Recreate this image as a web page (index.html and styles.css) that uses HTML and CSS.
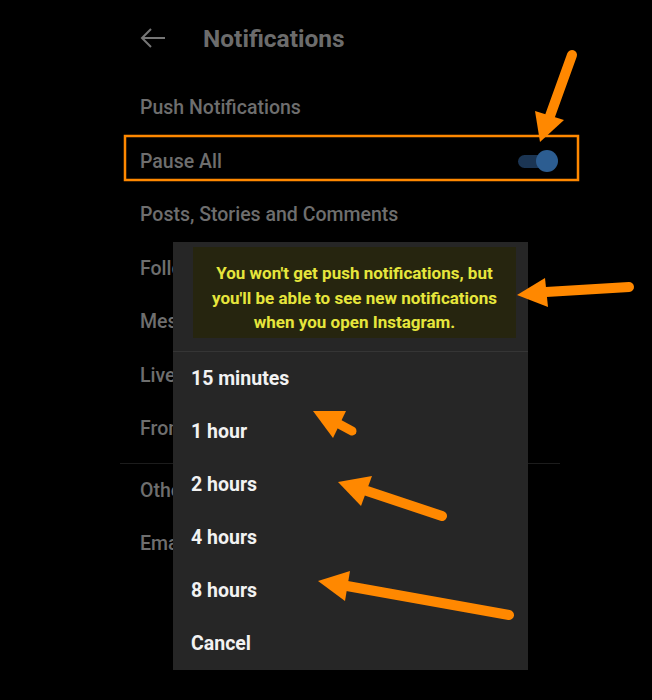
FILE: index.html
```html
<!DOCTYPE html>
<html lang="en">
<head>
    <meta charset="UTF-8">
    <title>Notifications</title>
    <link rel="stylesheet" href="styles.css">
</head>
<body>
    <div class="screen">
        <header class="topbar">
            <svg class="back" width="26" height="20" viewBox="0 0 26 20">
                <path d="M25 10H2M11 1L2 10l9 9" fill="none" stroke="#767676" stroke-width="2"/>
            </svg>
            <h1>Notifications</h1>
        </header>
        <ul class="settings">
            <li>Push Notifications</li>
            <li class="pause">
                <span>Pause All</span>
                <span class="toggle"><span class="knob"></span></span>
            </li>
            <li>Posts, Stories and Comments</li>
            <li>Following and Followers</li>
            <li>Messages</li>
            <li>Live and IGTV</li>
            <li>From Instagram</li>
            <li class="sep"></li>
            <li>Other Notification Types</li>
            <li>Email and SMS</li>
        </ul>

        <div class="sheet">
            <p class="note">You won't get push notifications, but<br>you'll be able to see new notifications<br>when you open Instagram.</p>
            <div class="options">
                <div class="option">15 minutes</div>
                <div class="option">1 hour</div>
                <div class="option">2 hours</div>
                <div class="option">4 hours</div>
                <div class="option">8 hours</div>
                <div class="option">Cancel</div>
            </div>
        </div>

        <!-- annotation layer -->
        <svg class="marks" width="652" height="700" viewBox="0 0 652 700">
            <g fill="#ff8800" stroke="#ff8800" stroke-linecap="round">
                <rect x="125" y="136" width="453" height="44" fill="none" stroke-width="2.5"/>

                <line x1="572" y1="55" x2="550" y2="116" stroke-width="10"/>
                <polygon points="540,142 535,111 564,120" stroke="none"/>

                <line x1="629" y1="287" x2="546" y2="292" stroke-width="10"/>
                <polygon points="517,295 545,278 548,307" stroke="none"/>

                <line x1="352" y1="431" x2="339" y2="424" stroke-width="9"/>
                <polygon points="313,411 346,411 333,438" stroke="none"/>

                <line x1="442" y1="516" x2="367" y2="491" stroke-width="10"/>
                <polygon points="338,482 372,476 361,506" stroke="none"/>

                <line x1="509" y1="615" x2="347" y2="586" stroke-width="10"/>
                <polygon points="318,581 350,571 345,601" stroke="none"/>
            </g>
        </svg>
    </div>
</body>
</html>
```

FILE: styles.css
```css
body {
    margin: 0;
    padding: 0;
    background-color: #000;
    font-family: Roboto, "Liberation Sans", sans-serif;
}
.screen {
    position: relative;
    width: 652px;
    height: 700px;
    overflow: hidden;
    background-color: #000;
}
.topbar {
    display: flex;
    align-items: center;
    height: 76px;
    padding-left: 140px;
    gap: 37px;
}
.topbar h1 {
    margin: 0;
    font-size: 24.5px;
    font-weight: 700;
    color: #6c6c6c;
}
.settings {
    list-style: none;
    margin: 0;
    padding: 5px 0 0 140px;
    width: 418px;
}
.settings li {
    display: flex;
    align-items: center;
    justify-content: space-between;
    height: 53.5px;
    font-size: 19.5px;
    font-weight: 500;
    color: #6e6e6e;
    white-space: nowrap;
}
.settings li.sep {
    height: 1px;
    margin: 7px 0 0 -20px;
    width: 440px;
    background-color: #1c1c1c;
}
.toggle {
    position: relative;
    width: 34px;
    height: 13px;
    margin-right: 6px;
    border-radius: 7px;
    background-color: #1b3553;
}
.toggle .knob {
    position: absolute;
    right: -6px;
    top: -4.5px;
    width: 22px;
    height: 22px;
    border-radius: 50%;
    background-color: #2c5d91;
}
.sheet {
    position: absolute;
    left: 173px;
    top: 242px;
    width: 355px;
    height: 428px;
    background-color: #262626;
}
.note {
    margin: 5px 12px 0 20px;
    height: 91px;
    box-sizing: border-box;
    padding: 14px 0 0;
    background-color: #26250f;
    color: #e6e63c;
    font-size: 17px;
    font-weight: 700;
    line-height: 24.5px;
    text-align: center;
    white-space: nowrap;
}
.options {
    margin-top: 13px;
    border-top: 1px solid #353535;
}
.option {
    display: flex;
    align-items: center;
    height: 53px;
    padding-left: 18px;
    font-size: 19.5px;
    font-weight: 700;
    color: #f2f2f2;
}
.marks {
    position: absolute;
    left: 0;
    top: 0;
    pointer-events: none;
}
```
